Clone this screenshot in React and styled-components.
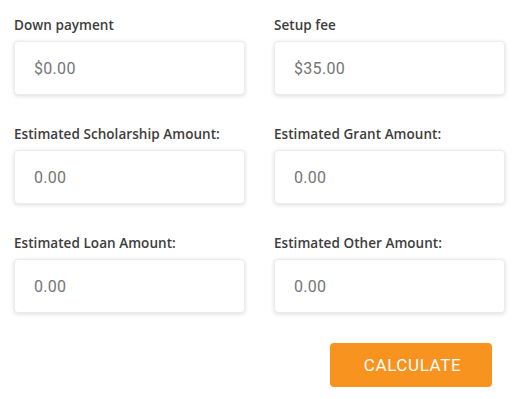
import React from 'react'
import styled, { createGlobalStyle } from 'styled-components'

const GlobalStyle = createGlobalStyle`
    body {
        margin: 0;
        background: #ffffff;
        font-family: Roboto, "Liberation Sans", sans-serif;
    }
`

const Form = styled.form`
    padding: 17px 7px 0 14px;
`

const Grid = styled.div`
    display: grid;
    grid-template-columns: 231px 231px;
    column-gap: 29px;
    row-gap: 31px;
`

const Field = styled.label`
    display: flex;
    flex-direction: column;
`

const Label = styled.span`
    font-family: "Open Sans", Roboto, sans-serif;
    font-size: 13.5px;
    font-weight: 600;
    line-height: 16px;
    letter-spacing: 0.05px;
    color: #3d3d3d;
    margin-bottom: 8px;
`

const Input = styled.input`
    box-sizing: border-box;
    height: 54px;
    width: 100%;
    padding: 0 19px;
    border: 1px solid #ececec;
    border-radius: 4px;
    box-shadow: 0 1px 4px rgba(0, 0, 0, 0.14);
    font-family: Roboto, "Liberation Sans", sans-serif;
    font-size: 16px;
    letter-spacing: 0.3px;
    color: #444;
    outline: none;

    ::placeholder {
        color: #adadad;
    }
`

const Actions = styled.div`
    display: flex;
    justify-content: flex-end;
    width: 478px;
    margin-top: 30px;
`

const Button = styled.button`
    width: 162px;
    height: 44px;
    border: none;
    border-radius: 4px;
    background-color: #f7931e;
    color: #ffffff;
    font-family: Roboto, "Liberation Sans", sans-serif;
    font-size: 17px;
    letter-spacing: 0.6px;
    padding: 0 0 0 3px;
    cursor: pointer;
`

const fields = [
    { label: 'Down payment', placeholder: '$0.00' },
    { label: 'Setup fee', placeholder: '$35.00' },
    { label: 'Estimated Scholarship Amount:', placeholder: '0.00' },
    { label: 'Estimated Grant Amount:', placeholder: '0.00' },
    { label: 'Estimated Loan Amount:', placeholder: '0.00' },
    { label: 'Estimated Other Amount:', placeholder: '0.00' },
]

function App() {
    return (
        <>
            <GlobalStyle />
            <Form onSubmit={e => e.preventDefault()}>
                <Grid>
                    {fields.map((f) => {
                        return (
                            <Field key={f.label}>
                                <Label>{f.label}</Label>
                                <Input type='text' placeholder={f.placeholder} />
                            </Field>
                        )
                    })}
                </Grid>
                <Actions>
                    <Button type='submit'>CALCULATE</Button>
                </Actions>
            </Form>
        </>
    )
}

export default App
